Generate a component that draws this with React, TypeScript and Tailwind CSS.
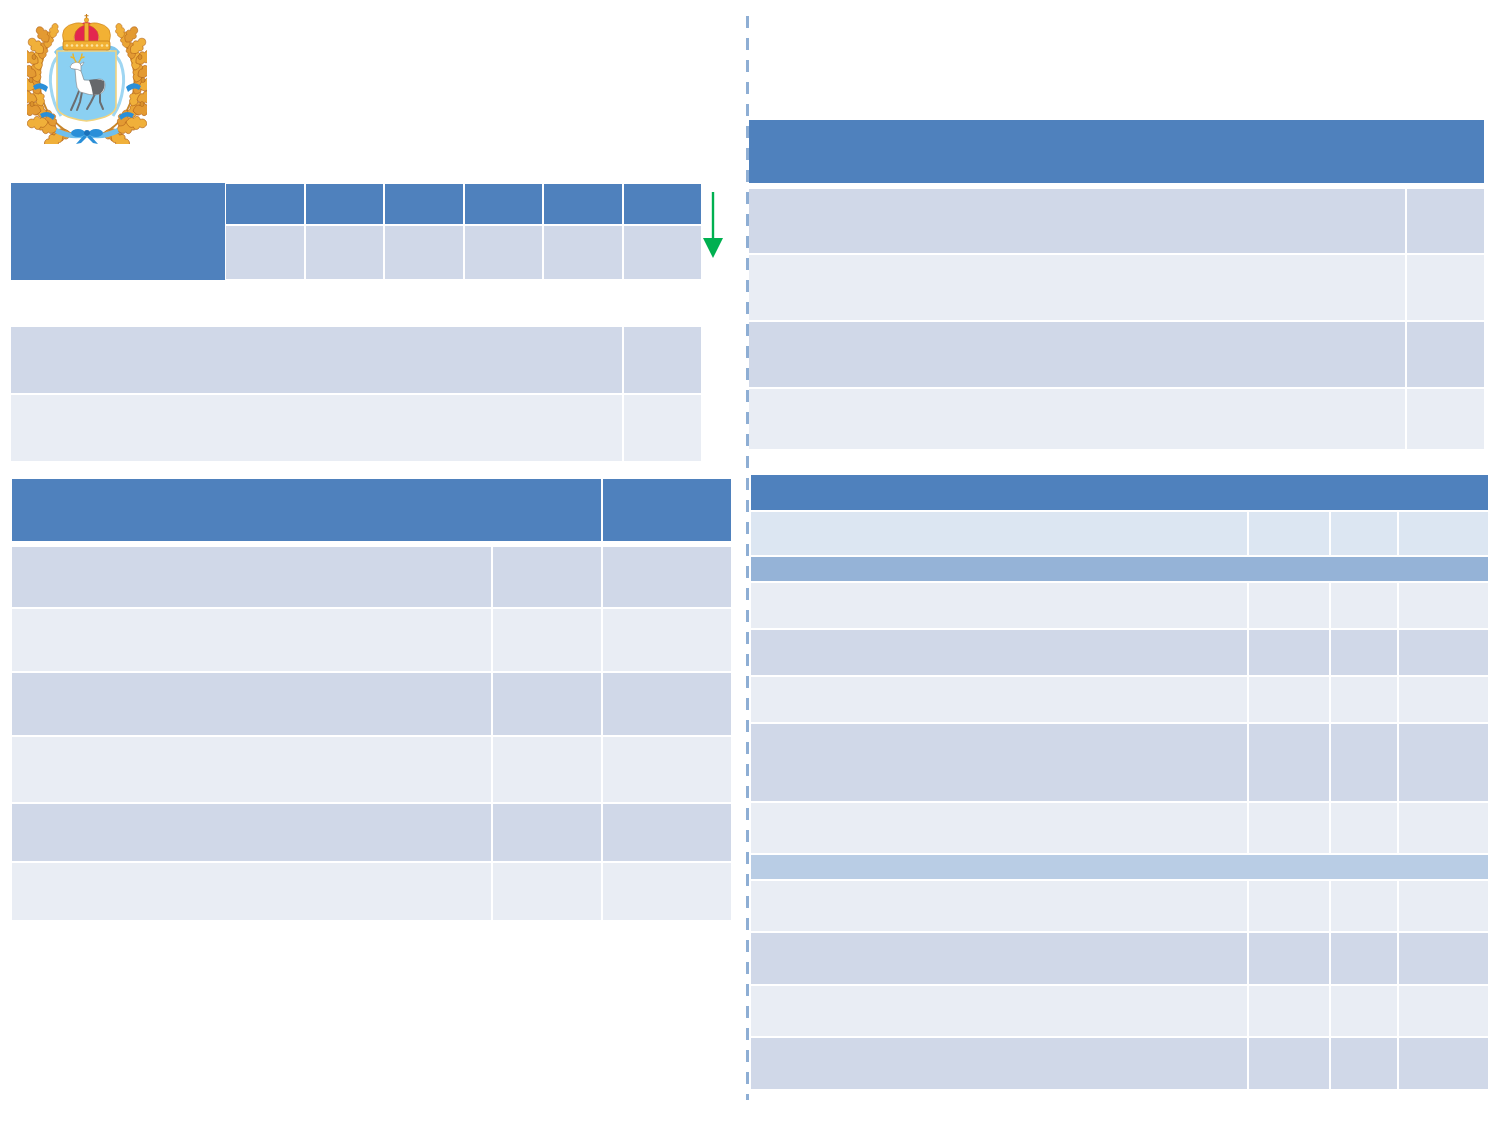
import React from 'react'

const HEAD = 'bg-[#4f81bd]'
const DARK = 'bg-[#d0d8e8]'
const LIGHT = 'bg-[#e9edf4]'
const PALE = 'bg-[#dce6f2]'
const BAND1 = 'bg-[#95b3d7]'
const BAND2 = 'bg-[#b9cde5]'

type Row = { h: string; tone: string; band?: boolean }

// lobed oak leaf, tip pointing up from the origin
const LEAF =
  'M0 0 C-2.5 -1.5 -4.5 -3.5 -3 -5.5 C-5.5 -6.5 -5 -9.5 -2.5 -10 C-4 -12 -2.5 -14.5 0 -15 C2.5 -14.5 4 -12 2.5 -10 C5 -9.5 5.5 -6.5 3 -5.5 C4.5 -3.5 2.5 -1.5 0 0Z'

const LEAVES: [number, number, number, number][] = [
  [44, 120, -95, 1.3], [36, 121, -120, 1.4], [30, 116, -75, 1.4], [28, 112, -30, 1.2],
  [21, 108, -95, 1.4], [19, 103, -45, 1.3], [14, 97, -80, 1.4], [15, 92, -20, 1.2],
  [10, 86, -75, 1.4], [12, 80, -25, 1.2], [8, 74, -70, 1.4], [11, 68, -15, 1.2],
  [9, 62, -60, 1.3], [12, 56, -10, 1.2], [11, 49, -55, 1.3], [15, 45, 5, 1.1],
  [16, 39, -45, 1.3], [20, 34, 10, 1.1], [21, 28, -35, 1.2], [25, 24, 15, 1],
]

function Branch() {
  return (
    <g>
      <path d="M50 122 C22 112 10 84 13 58 C15 42 20 32 26 22" stroke="#c8862a" strokeWidth="1.8" fill="none" />
      {/* light blue ribbon running behind the leaves */}
      <path d="M40 38 Q30 40 26 50 Q22 62 24 74 Q26 90 34 102" stroke="#9fd6f2" strokeWidth="3" fill="none" />
      {LEAVES.map(([x, y, r, s], i) => (
        <path
          key={i}
          d={LEAF}
          transform={`translate(${x} ${y}) rotate(${r}) scale(${s})`}
          fill={i % 3 === 0 ? '#e39a32' : i % 3 === 1 ? '#f0b03a' : '#eaa535'}
          stroke="#b5661c"
          strokeWidth="0.5"
        />
      ))}
      <ellipse cx="5" cy="90" rx="2" ry="2.6" fill="#d9912c" stroke="#a85e18" strokeWidth="0.5" />
      <ellipse cx="4" cy="66" rx="2" ry="2.6" fill="#d9912c" stroke="#a85e18" strokeWidth="0.5" />
      <ellipse cx="7" cy="43" rx="2" ry="2.6" fill="#d9912c" stroke="#a85e18" strokeWidth="0.5" />
      {/* ribbon pieces */}
      <path d="M27 38 Q33 30 42 32 L41 37 Q34 35 30 42 Z" fill="#7fc6ee" />
      <path d="M6 72 Q13 66 21 73 L19 78 Q13 72 8 76 Z" fill="#2a8fd8" />
      <path d="M13 100 Q21 95 28 102 L26 106 Q20 100 15 104 Z" fill="#2a8fd8" />
    </g>
  )
}

function Emblem({ className }: { className?: string }) {
  return (
    <svg viewBox="0 0 120 130" className={className}>
      <Branch />
      <g transform="translate(120 0) scale(-1 1)">
        <Branch />
      </g>

      {/* shield */}
      <path d="M30 37 H89 V92 Q89 103 59.5 107 Q30 103 30 92 Z" fill="#8bd0f2" stroke="#f1d37e" strokeWidth="1.6" />

      {/* bottom ribbon & bow */}
      <path d="M30 114 Q45 122 60 118 Q75 122 90 114 L92 119 Q76 127 60 123 Q44 127 28 119 Z" fill="#6fbfec" />
      <ellipse cx="51" cy="119" rx="7" ry="4" fill="#2a8fd8" />
      <ellipse cx="69" cy="119" rx="7" ry="4" fill="#2a8fd8" />
      <circle cx="60" cy="119" r="3" fill="#1b72bb" />
      <path d="M57 121 L49 130 L54 129 L60 123 Z" fill="#2a8fd8" />
      <path d="M63 121 L71 130 L66 129 L60 123 Z" fill="#2a8fd8" />

      {/* goat */}
      <g stroke="#6b6d70" strokeLinecap="round" fill="none" strokeWidth="2">
        <path d="M52 77 L48 87 L44 96" />
        <path d="M55 78 L53 88 L50 96" />
        <path d="M68 80 L64 88 L60 95" />
        <path d="M73 79 L73 88 L76 95" />
      </g>
      <path
        d="M48 55 Q51 53 54 57 L57 66 Q66 67 72 65 Q78 65 78 71 Q78 78 73 80 L68 81 Q62 81 57 79 L53 78 Q49 74 49 67 Z"
        fill="#ffffff"
        stroke="#7a7c80"
        strokeWidth="0.6"
      />
      <path d="M62 66 Q72 64 77 67 Q79 75 73 80 L66 81 Q65 73 62 66Z" fill="#66686b" />
      <path d="M43 53 Q44 49 49 48 Q53 48 54 51 L54 57 Q51 55 47 55 Q44 55 43 53Z" fill="#ffffff" stroke="#7a7c80" strokeWidth="0.6" />
      <path d="M53 50 L57 48 L55 52 Z" fill="#ffffff" stroke="#7a7c80" strokeWidth="0.5" />
      <g stroke="#e8b52e" strokeWidth="1.5" fill="none" strokeLinecap="round">
        <path d="M49 48 Q46 44 46 40" />
        <path d="M52 48 Q55 44 55 40" />
        <path d="M47 44 L44 43" />
        <path d="M54 44 L57 43" />
      </g>

      {/* crown */}
      <path d="M48 28 Q44 10 59.5 8 Q75 10 71 28Z" fill="#e3264f" />
      <path d="M37 29 Q31 12 49 9 Q55 8 57.5 11 Q45 15 47.5 29Z" fill="#f2b134" stroke="#c77d1a" strokeWidth="0.6" />
      <path d="M82 29 Q88 12 70 9 Q64 8 61.5 11 Q74 15 71.5 29Z" fill="#f2b134" stroke="#c77d1a" strokeWidth="0.6" />
      <path d="M57.5 9 h4 v19 h-4z" fill="#f2b134" stroke="#c77d1a" strokeWidth="0.5" />
      <rect x="36" y="27" width="47" height="9" rx="2" fill="#f2b134" stroke="#c77d1a" strokeWidth="0.8" />
      {[40, 45, 50, 55, 60, 65, 70, 75, 80].map((x) => (
        <circle key={x} cx={x} cy="31.5" r="1.3" fill="#fbe3a0" />
      ))}
      <circle cx="59.5" cy="6" r="2.2" fill="#f2b134" stroke="#c77d1a" strokeWidth="0.5" />
      <path d="M59.5 0 V4 M57.5 1.8 H61.5" stroke="#c77d1a" strokeWidth="1.1" />
    </svg>
  )
}

function ArrowDown({ className }: { className?: string }) {
  return (
    <svg viewBox="0 0 20 66" className={className}>
      <path d="M10 0 V46" stroke="#00b050" strokeWidth="2.4" />
      <path d="M0 46 H20 L10 66 Z" fill="#00b050" />
    </svg>
  )
}

function Cells({ cols, row }: { cols: number; row: Row }) {
  if (row.band) return <div className={`col-span-4 ${row.h} ${row.tone}`} />
  return (
    <>
      {Array.from({ length: cols }).map((_, i) => (
        <div key={i} className={`${row.h} ${row.tone}`} />
      ))}
    </>
  )
}

const LEFT_ROWS: Row[] = [
  { h: 'h-[60px]', tone: DARK },
  { h: 'h-[62px]', tone: LIGHT },
  { h: 'h-[62px]', tone: DARK },
  { h: 'h-[65px]', tone: LIGHT },
  { h: 'h-[57px]', tone: DARK },
  { h: 'h-[57px]', tone: LIGHT },
]

const TOP_RIGHT_ROWS: Row[] = [
  { h: 'h-[64px]', tone: DARK },
  { h: 'h-[65px]', tone: LIGHT },
  { h: 'h-[65px]', tone: DARK },
  { h: 'h-[60px]', tone: LIGHT },
]

const BOTTOM_RIGHT_ROWS: Row[] = [
  { h: 'h-[43px]', tone: PALE },
  { h: 'h-[24px]', tone: BAND1, band: true },
  { h: 'h-[45px]', tone: LIGHT },
  { h: 'h-[45px]', tone: DARK },
  { h: 'h-[45px]', tone: LIGHT },
  { h: 'h-[77px]', tone: DARK },
  { h: 'h-[50px]', tone: LIGHT },
  { h: 'h-[24px]', tone: BAND2, band: true },
  { h: 'h-[50px]', tone: LIGHT },
  { h: 'h-[51px]', tone: DARK },
  { h: 'h-[50px]', tone: LIGHT },
  { h: 'h-[51px]', tone: DARK },
]

export default function App() {
  return (
    <div className="flex h-[1125px] w-[1500px] overflow-hidden bg-white">
      {/* left half */}
      <div className="flex w-[746px] shrink-0 flex-col pl-[11px]">
        <Emblem className="ml-[16px] mt-[14px] h-[130px] w-[120px]" />

        <div className="mt-[39px] flex items-start">
          <div className={`h-[97px] w-[214px] ${HEAD}`} />
          <div className="ml-[1px] mt-[1px] grid w-[475px] grid-cols-6 gap-[2px]">
            {Array.from({ length: 6 }).map((_, i) => (
              <div key={`h${i}`} className={`h-[40px] ${HEAD}`} />
            ))}
            {Array.from({ length: 6 }).map((_, i) => (
              <div key={`r${i}`} className={`h-[53px] ${DARK}`} />
            ))}
          </div>
          <ArrowDown className="ml-[2px] mt-[9px] h-[66px] w-[20px]" />
        </div>

        <div className="mt-[47px] grid w-[690px] grid-cols-[611px_77px] gap-[2px]">
          <div className={`h-[66px] ${DARK}`} />
          <div className={`h-[66px] ${DARK}`} />
          <div className={`h-[66px] ${LIGHT}`} />
          <div className={`h-[66px] ${LIGHT}`} />
        </div>

        <div className="ml-[1px] mt-[18px] w-[719px]">
          <div className="grid grid-cols-[589px_128px] gap-[2px]">
            <div className={`h-[62px] ${HEAD}`} />
            <div className={`h-[62px] ${HEAD}`} />
          </div>
          <div className="mt-[6px] grid grid-cols-[479px_108px_128px] gap-[2px]">
            {LEFT_ROWS.map((r, i) => (
              <Cells key={i} cols={3} row={r} />
            ))}
          </div>
        </div>
      </div>

      {/* divider */}
      <div className="mt-[16px] h-[1084px] w-[3px] shrink-0 bg-[repeating-linear-gradient(to_bottom,#8eaed4_0px,#8eaed4_12px,transparent_12px,transparent_22px)]" />

      {/* right half */}
      <div className="flex flex-col">
        <div className="mt-[120px] w-[735px]">
          <div className={`h-[63px] ${HEAD}`} />
          <div className="mt-[6px] grid grid-cols-[656px_77px] gap-[2px]">
            {TOP_RIGHT_ROWS.map((r, i) => (
              <Cells key={i} cols={2} row={r} />
            ))}
          </div>
        </div>

        <div className="ml-[2px] mt-[26px] grid w-[737px] grid-cols-[496px_80px_66px_89px] gap-[2px]">
          <div className={`col-span-4 h-[35px] ${HEAD}`} />
          {BOTTOM_RIGHT_ROWS.map((r, i) => (
            <Cells key={i} cols={4} row={r} />
          ))}
        </div>
      </div>
    </div>
  )
}
